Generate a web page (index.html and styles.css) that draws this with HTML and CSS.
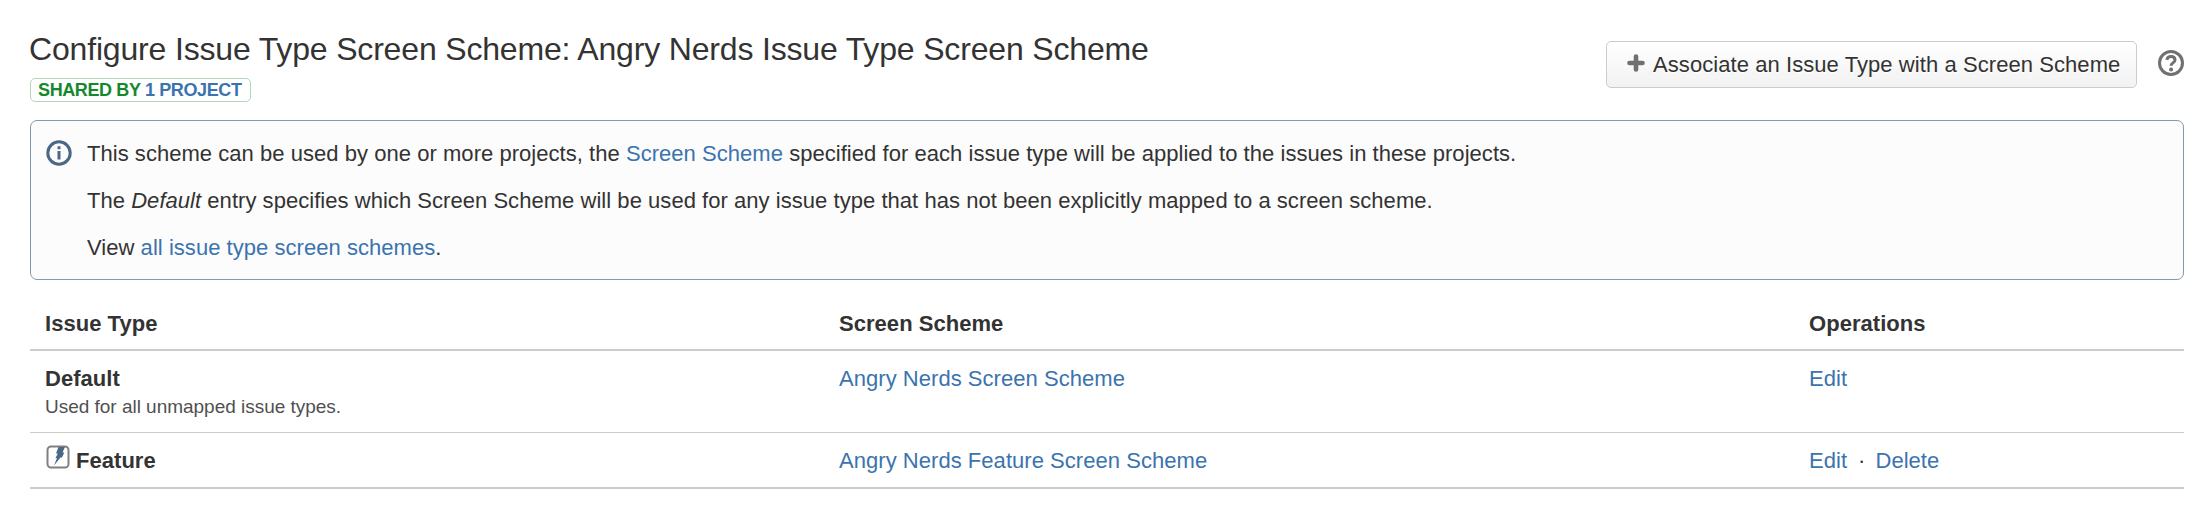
FILE: index.html
```html
<!DOCTYPE html>
<html lang="en">
<head>
  <meta charset="UTF-8">
  <title>Configure Issue Type Screen Scheme</title>
  <link rel="stylesheet" href="styles.css">
</head>
<body>
<div class="page-header">
  <div class="page-title">
    <h2>Configure Issue Type Screen Scheme: Angry Nerds Issue Type Screen Scheme</h2>
    <span class="shared-by">Shared by <a href="#">1 project</a></span>
  </div>
  <div class="page-actions">
    <button class="button" type="button">
      <svg class="icon-add" viewBox="0 0 18 18"><path d="M9 2.500v13M2.500 9h13"/></svg>
      <span>Associate an Issue Type with a Screen Scheme</span>
    </button>
    <a class="help" href="#" title="Help">
      <svg class="icon-help" viewBox="0 0 26 26">
        <circle cx="13" cy="13" r="11.500"/>
        <path d="M8.800 9.800c.5-2 2-3.200 4.200-3.200 2.400 0 4 1.300 4 3.300 0 2.700-3.800 2.800-3.800 5.800"/>
        <circle class="dot" cx="13.100" cy="19.400" r="2"/>
      </svg>
    </a>
  </div>
</div>

<div class="message">
  <svg class="icon-info" viewBox="0 0 26 26">
    <circle cx="13" cy="13" r="11.200"/>
    <path d="M13 11v8.400M13 6.200v3"/>
  </svg>
  <div class="message-text">
    <p>This scheme can be used by one or more projects, the <a href="#">Screen Scheme</a> specified for each issue type will be applied to the issues in these projects.</p>
    <p>The <em>Default</em> entry specifies which Screen Scheme will be used for any issue type that has not been explicitly mapped to a screen scheme.</p>
    <p>View <a href="#">all issue type screen schemes</a>.</p>
  </div>
</div>

<table class="schemes">
  <thead>
    <tr>
      <th class="col-type">Issue Type</th>
      <th class="col-scheme">Screen Scheme</th>
      <th>Operations</th>
    </tr>
  </thead>
  <tbody>
    <tr class="row-default">
      <td>
        <strong>Default</strong>
        <div class="description">Used for all unmapped issue types.</div>
      </td>
      <td><a href="#">Angry Nerds Screen Scheme</a></td>
      <td><a href="#">Edit</a></td>
    </tr>
    <tr class="row-feature">
      <td>
        <div class="issue-type">
          <svg class="icon-type" viewBox="0 0 24 24">
            <rect x="1.500" y="1.500" width="21" height="21" rx="3.500"/>
            <path d="M12.500 2H19l-2.500 5.500h1.800l-2.300 5h-1.500L8 20.500l3-7.500H9.500l2.300-4.500H10z"/>
          </svg>
          <strong>Feature</strong>
        </div>
      </td>
      <td><a href="#">Angry Nerds Feature Screen Scheme</a></td>
      <td>
        <ul class="operations">
          <li><a href="#">Edit</a></li>
          <li><a href="#">Delete</a></li>
        </ul>
      </td>
    </tr>
  </tbody>
</table>
</body>
</html>
```

FILE: styles.css
```css
* {
  box-sizing: border-box;
}

body {
  margin: 0;
  padding: 29px 24px 0 30px;
  background: #fff;
  color: #333;
  font: 22px/28px Arial, "Liberation Sans", sans-serif;
  letter-spacing: 0.04px;
}

a {
  color: #3b73af;
  text-decoration: none;
}

svg {
  display: block;
  flex: none;
  fill: none;
}

.page-header {
  display: flex;
  justify-content: space-between;
  height: 91px;
}

h2 {
  margin: 0 0 0 -1px;
  font-size: 32px;
  font-weight: normal;
  letter-spacing: -0.17px;
  line-height: 40px;
}

.shared-by {
  display: block;
  width: 221px;
  height: 24px;
  margin-top: 9px;
  padding-left: 7px;
  border: 1px solid #b2d8b9;
  border-radius: 5px;
  color: #14892c;
  font-size: 18px;
  font-weight: bold;
  letter-spacing: -0.38px;
  line-height: 22px;
  text-transform: uppercase;
  white-space: nowrap;
}

.page-actions {
  display: flex;
  align-items: flex-start;
  padding-top: 12px;
}

.button {
  display: flex;
  align-items: center;
  width: 531px;
  height: 47px;
  padding: 0 0 0 20px;
  border: 1px solid #ccc;
  border-radius: 5px;
  background: linear-gradient(#fff, #f2f2f2);
  color: #333;
  font: inherit;
  letter-spacing: 0.07px;
  text-shadow: 0 1px 0 #fff;
  white-space: nowrap;
}

.icon-add {
  width: 18px;
  height: 18px;
  margin: 0 8px 3px 0;
  stroke: #707070;
  stroke-width: 4.6;
  stroke-linecap: round;
}

.help {
  margin: 9px 0 0 21px;
}

.icon-help {
  width: 26px;
  height: 26px;
  stroke: #707070;
  stroke-width: 3;
}

.icon-help .dot {
  fill: #707070;
  stroke: none;
}

.message {
  display: flex;
  height: 160px;
  padding: 19px 15px 0;
  border: 1px solid #8299b0;
  border-radius: 7px;
  background: #fcfcfc;
}

.icon-info {
  width: 26px;
  height: 26px;
  margin-right: 15px;
  stroke: #4a6785;
  stroke-width: 3;
}

.message p {
  margin: 0 0 19px;
}

.schemes {
  width: 100%;
  border-collapse: separate;
  border-spacing: 0;
  table-layout: fixed;
}

.col-type {
  width: 794px;
}

.col-scheme {
  width: 970px;
}

th,
td {
  padding: 0 0 0 15px;
  text-align: left;
  vertical-align: top;
}

th {
  height: 71px;
  padding-top: 30px;
  border-bottom: 2px solid #ccc;
}

.row-default td {
  height: 82px;
  padding-top: 14px;
  border-bottom: 1px solid #ccc;
}

.row-feature td {
  height: 56px;
  padding-top: 14px;
  border-bottom: 2px solid #ccc;
}

.description {
  color: #505050;
  font-size: 19px;
  letter-spacing: -0.02px;
}

.issue-type {
  display: flex;
}

.icon-type {
  width: 24px;
  height: 24px;
  margin: -2px 6px 0 1px;
}

.icon-type rect {
  stroke: #808080;
  stroke-width: 2;
}

.icon-type path {
  fill: #4a6785;
}

.operations {
  display: flex;
  margin: 0;
  padding: 0;
  list-style: none;
}

.operations li + li::before {
  content: "·";
  padding: 0 10px 0 11px;
}
```
